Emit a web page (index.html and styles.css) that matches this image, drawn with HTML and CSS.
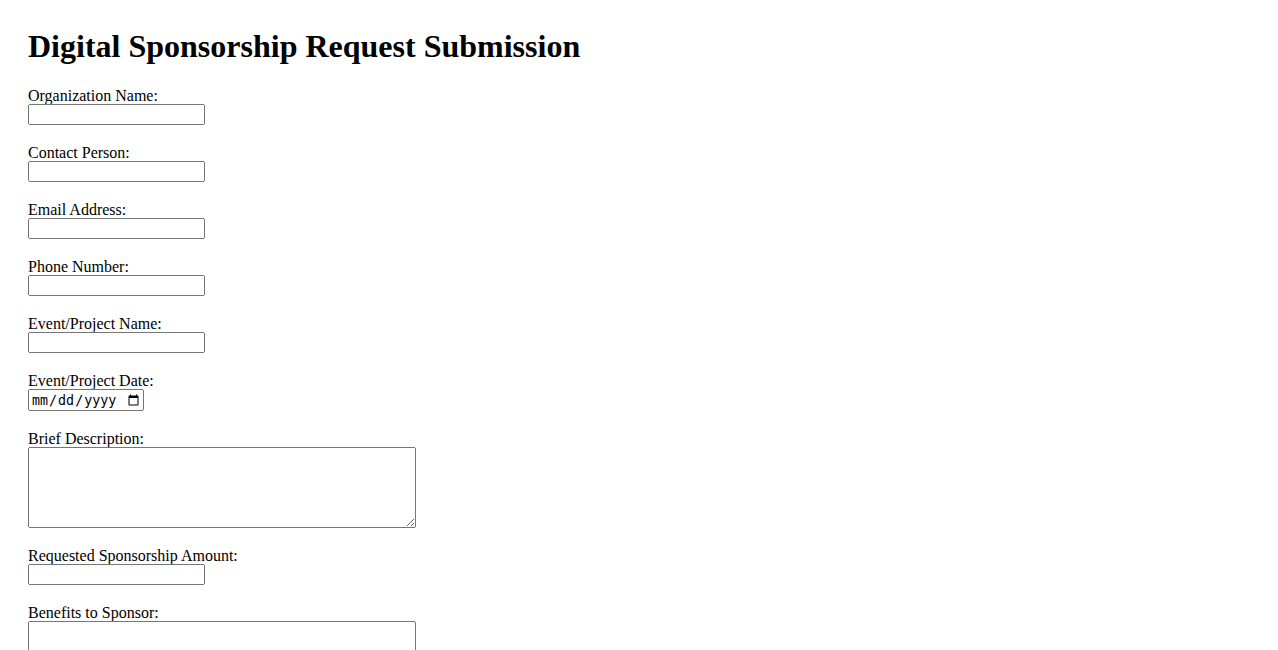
FILE: index.html
```html
<!DOCTYPE html>
<html lang="en">
<head>
<meta charset="utf-8">
<title>Digital Sponsorship Request Submission</title>
<link rel="stylesheet" href="styles.css">
</head>
<body>
<main class="page">
  <h1 class="title">Digital Sponsorship Request Submission</h1>
  <form class="form">
    <label class="label" for="org">Organization Name:</label>
    <input class="text-input" type="text" id="org" name="org">

    <label class="label" for="contact">Contact Person:</label>
    <input class="text-input" type="text" id="contact" name="contact">

    <label class="label" for="email">Email Address:</label>
    <input class="text-input" type="email" id="email" name="email">

    <label class="label" for="phone">Phone Number:</label>
    <input class="text-input" type="tel" id="phone" name="phone">

    <label class="label" for="event">Event/Project Name:</label>
    <input class="text-input" type="text" id="event" name="event">

    <label class="label" for="date">Event/Project Date:</label>
    <input class="date-input" type="date" id="date" name="date">

    <label class="label" for="desc">Brief Description:</label>
    <textarea class="area" id="desc" name="desc"></textarea>

    <label class="label" for="amount">Requested Sponsorship Amount:</label>
    <input class="text-input" type="text" id="amount" name="amount">

    <label class="label" for="benefits">Benefits to Sponsor:</label>
    <textarea class="area" id="benefits" name="benefits"></textarea>

    <button class="submit" type="submit">Submit Request</button>
  </form>
</main>
</body>
</html>
```

FILE: styles.css
```css
html, body {
  margin: 0;
  padding: 0;
  background: #ffffff;
}

.page {
  padding: 28px;
  font-family: "Liberation Serif", "Times New Roman", serif;
  font-size: 16px;
  color: #000000;
}

.title {
  margin: 0 0 22.4px 0;
  font-size: 32px;
  font-weight: bold;
  line-height: 37px;
}

.form {
  display: flex;
  flex-direction: column;
  align-items: flex-start;
}

.label {
  display: block;
  line-height: 17px;
  height: 17px;
}

.text-input {
  box-sizing: border-box;
  width: 177px;
  height: 21px;
  margin: 0 0 19px 0;
}

.date-input {
  box-sizing: border-box;
  width: 116px;
  height: 22px;
  margin: 0 0 19px 0;
}

.area {
  box-sizing: border-box;
  width: 388px;
  height: 81px;
  margin: 0 0 19px 0;
}

.submit {
  margin: 0;
}
```
